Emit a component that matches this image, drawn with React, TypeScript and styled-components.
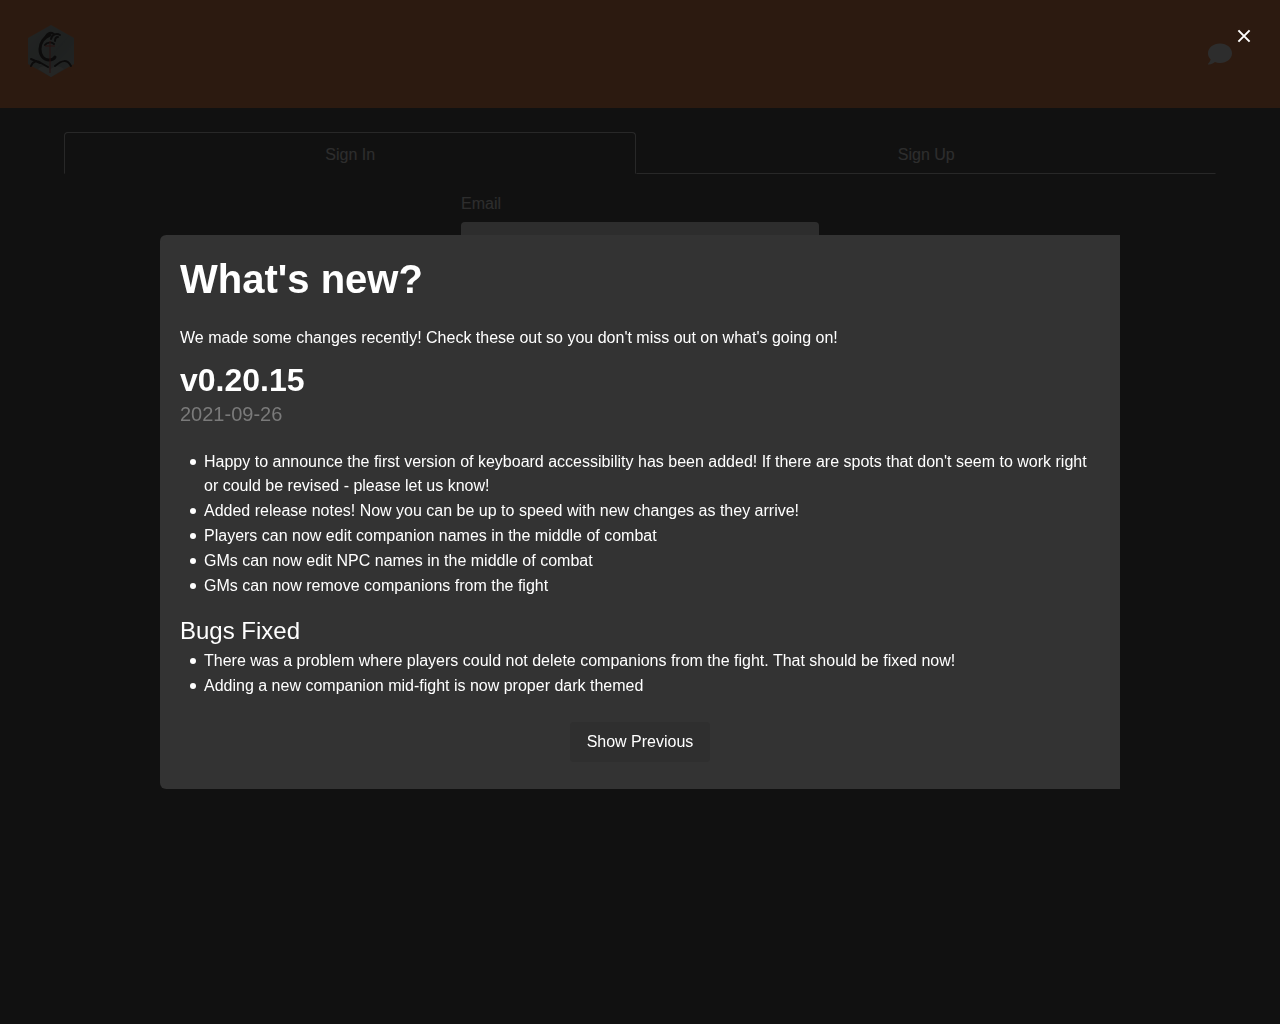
import React from "react";
import styled, { createGlobalStyle } from "styled-components";
import { FaComment } from "react-icons/fa";

const GlobalStyle = createGlobalStyle`
  *, *::before, *::after { box-sizing: border-box; }
  body {
    margin: 0;
    background: #3a3a3a;
    color: #fff;
    font-family: "Liberation Sans", Arial, Helvetica, sans-serif;
    font-size: 16px;
    line-height: 24px;
  }
  h1, h2, h3, p, ul { margin: 0; padding: 0; font-weight: 400; }
  button, input { font: inherit; color: inherit; }
`;

const Header = styled.header`
  display: flex;
  align-items: center;
  justify-content: space-between;
  height: 108px;
  padding: 0 48px 0 24px;
  background: #f87c36;
`;

const HomeLink = styled.a`
  display: flex;
  padding-bottom: 6px;
`;

const ChatButton = styled.button`
  display: flex;
  padding: 0;
  border: 0;
  background: none;
  font-size: 24px;
`;

const Page = styled.main`
  padding: 24px 64px;
`;

const Tabs = styled.div`
  display: flex;
`;

const Tab = styled.button<{ $active?: boolean }>`
  flex: 1 1 auto;
  height: 42px;
  padding: 3px 16px 0;
  background: none;
  border: 1px solid ${(p) => (p.$active ? "#dbdbdb" : "transparent")};
  border-bottom-color: ${(p) => (p.$active ? "transparent" : "#dbdbdb")};
  border-radius: ${(p) => (p.$active ? "4px 4px 0 0" : "0")};
`;

const Form = styled.form`
  display: flex;
  flex-direction: column;
  gap: 6px;
  max-width: 358px;
  margin: 18px auto 0;
`;

const Input = styled.input`
  width: 100%;
  height: 40px;
  padding: 0 12px;
  border: 0;
  border-radius: 4px;
  background: #fff;
`;

const Overlay = styled.div`
  position: fixed;
  inset: 0;
  display: flex;
  align-items: center;
  justify-content: center;
  background: rgba(10, 10, 10, 0.86);
`;

const Dialog = styled.section`
  width: 75%;
  max-height: calc(100vh - 40px);
  overflow: auto;
  padding: 22px 20px 27px;
  border-radius: 6px 0 0 6px;
  background: #333;
`;

const Title = styled.h1`
  margin-bottom: 24px;
  font-size: 40px;
  font-weight: 700;
  line-height: 45px;
`;

const Version = styled.h2`
  margin-top: 12px;
  font-size: 32px;
  font-weight: 700;
  line-height: 36px;
`;

const ReleaseDate = styled.p`
  margin: 4px 0 24px;
  color: #7a7a7a;
  font-size: 20px;
  line-height: 24px;
`;

const Notes = styled.ul`
  list-style: none;
`;

const Note = styled.li`
  display: grid;
  grid-template-columns: 6px 1fr;
  column-gap: 8px;
  padding-left: 10px;

  &::before {
    content: "";
    width: 6px;
    height: 6px;
    margin-top: 9px;
    border-radius: 50%;
    background: currentColor;
  }

  & + & { margin-top: 1px; }
`;

const Subheading = styled.h3`
  margin: 18px 0 3px;
  font-size: 24px;
  line-height: 30px;
`;

const Actions = styled.div`
  display: flex;
  justify-content: center;
  margin-top: 24px;
`;

const ActionButton = styled.button`
  height: 40px;
  padding: 0 17px;
  border: 0;
  border-radius: 4px;
  background: #2f2f2f;
`;

const CloseButton = styled.button`
  position: absolute;
  top: 20px;
  right: 20px;
  display: flex;
  align-items: center;
  justify-content: center;
  width: 32px;
  height: 32px;
  padding: 0;
  border: 0;
  background: none;
`;

const added = [
  "Happy to announce the first version of keyboard accessibility has been added! If there are spots that don't seem to work right or could be revised - please let us know!",
  "Added release notes! Now you can be up to speed with new changes as they arrive!",
  "Players can now edit companion names in the middle of combat",
  "GMs can now edit NPC names in the middle of combat",
  "GMs can now remove companions from the fight",
];

const fixed = [
  "There was a problem where players could not delete companions from the fight. That should be fixed now!",
  "Adding a new companion mid-fight is now proper dark themed",
];

function Logo() {
  return (
    <svg width="54" height="54" viewBox="0 0 54 54" aria-hidden="true">
      <defs>
        <linearGradient id="hex" x1="0" y1="0" x2="1" y2="1">
          <stop offset="0" stopColor="#b4bcb8" />
          <stop offset="0.55" stopColor="#98a6a2" />
          <stop offset="1" stopColor="#b2bcb8" />
        </linearGradient>
      </defs>
      <path d="M27 1 50 14v26L27 53 4 40V14Z" fill="url(#hex)" />
      <path d="M14 45q6-6 12 1 7-7 14-1L27 53Z" fill="#c6cbc6" />
      <g fill="none" stroke="#171314" strokeLinecap="round">
        <path d="M26 11c-6 2-10 8-10 14 0 7 4 11 9 11 3 0 5-1 6-3" strokeWidth="3" />
        <path d="M22 12c2-3 5-4 8-2M27 15c1-5 6-6 9-4M31 17c0-3 1-4 3-4M21 21c2-3 7-3 9-1" strokeWidth="2" />
        <path d="M7 42c2-5 6-6 10-3l7 4M7 35l9 4M31 42c7-6 12-7 16 0" strokeWidth="2" />
      </g>
      <path d="M26 17v32M21 22h10" fill="none" stroke="#d53a2d" strokeWidth="1" />
    </svg>
  );
}

function NoteList({ items }: { items: string[] }) {
  return (
    <Notes>
      {items.map((item) => (
        <Note key={item}>{item}</Note>
      ))}
    </Notes>
  );
}

export default function App() {
  return (
    <>
      <GlobalStyle />
      <Header>
        <HomeLink href="#" aria-label="Home">
          <Logo />
        </HomeLink>
        <ChatButton type="button" aria-label="Chat">
          <FaComment />
        </ChatButton>
      </Header>
      <Page>
        <Tabs role="tablist">
          <Tab type="button" role="tab" aria-selected="true" $active>
            Sign In
          </Tab>
          <Tab type="button" role="tab" aria-selected="false">
            Sign Up
          </Tab>
        </Tabs>
        <Form>
          <label htmlFor="email">Email</label>
          <Input id="email" type="email" />
        </Form>
      </Page>
      <Overlay>
        <Dialog role="dialog" aria-modal="true" aria-labelledby="news-title">
          <Title id="news-title">What's new?</Title>
          <p>We made some changes recently! Check these out so you don't miss out on what's going on!</p>
          <Version>v0.20.15</Version>
          <ReleaseDate>2021-09-26</ReleaseDate>
          <NoteList items={added} />
          <Subheading>Bugs Fixed</Subheading>
          <NoteList items={fixed} />
          <Actions>
            <ActionButton type="button">Show Previous</ActionButton>
          </Actions>
        </Dialog>
        <CloseButton type="button" aria-label="Close">
          <svg width="14" height="14" viewBox="0 0 14 14" aria-hidden="true">
            <path d="M1.4 1.4l11.2 11.2M12.6 1.4L1.4 12.6" stroke="#fff" strokeWidth="2" />
          </svg>
        </CloseButton>
      </Overlay>
    </>
  );
}
